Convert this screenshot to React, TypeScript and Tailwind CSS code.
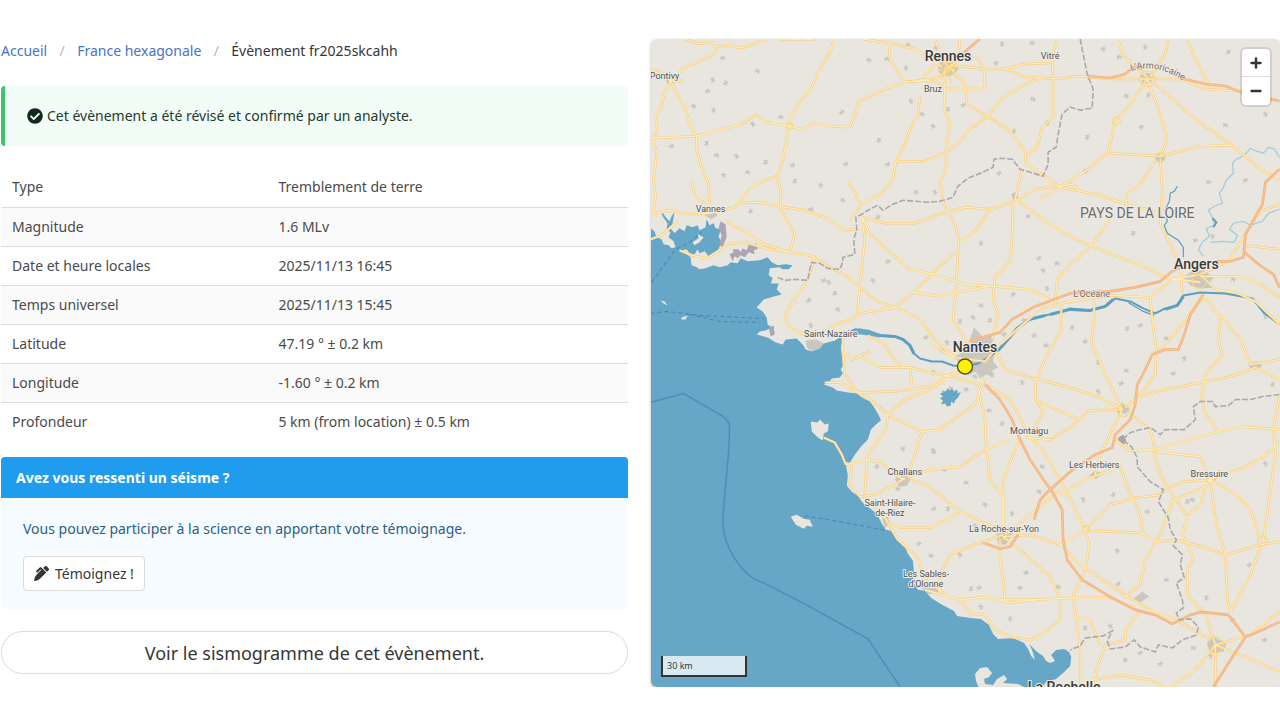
import { FaCheckCircle, FaPenAlt } from 'react-icons/fa'

const EVENT_ROWS = [
  { label: 'Type', value: 'Tremblement de terre' },
  { label: 'Magnitude', value: '1.6 MLv' },
  { label: 'Date et heure locales', value: '2025/11/13 16:45' },
  { label: 'Temps universel', value: '2025/11/13 15:45' },
  { label: 'Latitude', value: '47.19 ° ± 0.2 km' },
  { label: 'Longitude', value: '-1.60 ° ± 0.2 km' },
  { label: 'Profondeur', value: '5 km (from location) ± 0.5 km' },
]

const SEA =
  'M650,228 655,232 657,238 662,240 664,245 669,246 672,249 676,248 674,242 669,238 671,233 667,230 668,224 663,217 662,212 667,219 670,222 672,217 675,213 673,224 671,229 675,234 680,229 685,232 687,226 693,228 698,226 700,231 706,228 707,220 710,226 714,224 716,229 721,230 719,238 722,242 719,250 714,254 709,257 705,252 700,254 698,250 695,255 690,254 687,250 683,251 691,258 692,266 697,268 700,270 706,269 714,266 720,268 728,266 731,263 738,264 741,259 748,262 760,261 768,258 772,263 778,266 786,265 793,266 789,270 783,270 780,268 770,269 769,276 773,279 771,284 779,284 777,290 782,295 774,297 764,300 757,308 763,312 767,318 768,325 772,328 766,331 760,332 757,335 768,338 776,343 783,345 786,340 797,339 803,345 806,350 812,352 820,349 824,344 835,341 840,338 843,335 855,329 862,329 862,334 845,337 843,341 841,347 842,356 843,366 841,370 843,374 840,378 832,379 829,383 824,385 833,388 837,391 848,393 857,394 862,398 870,402 875,409 880,418 881,421 876,425 871,430 868,440 861,447 855,455 850,463 846,462 844,450 840,444 833,440 828,440 822,442 816,436 811,429 812,421 818,420 823,425 829,425 828,433 840,441 845,450 846,464 848,476 847,486 852,492 858,496 862,502 868,507 877,514 882,524 886,530 891,531 896,539 904,545 908,554 913,561 914,572 913,582 918,590 925,591 931,598 942,605 954,611 957,616 970,618 981,619 989,625 993,634 998,639 1013,638 1024,643 1028,649 1031,656 1035,660 1032,650 1029,644 1037,652 1043,656 1046,661 1050,663 1055,661 1051,655 1056,650 1064,649 1069,652 1071,657 1070,666 1064,672 1056,679 1046,682 1040,690 650,690 Z'

const LAND_ISLANDS = [
  'M811,422 818,423 820,420 825,425 829,424 828,432 824,434 823,441 818,438 812,432 Z',
  'M791,517 797,515 804,519 810,520 813,527 807,526 804,529 796,525 Z',
  'M661,301 665,302 668,306 664,304 Z',
  'M682,318 688,316 686,320 682,320 Z',
  'M693,243 699,239 698,235 704,238 700,243 695,246 Z',
  'M975,674 980,668 987,667 992,673 989,677 984,679 985,684 993,685 997,679 1004,675 1007,679 1003,683 1018,684 1030,690 980,690 976,681 Z',
]

const LOIRE =
  '843,333 860,331 868,332 880,336 895,337 903,340 910,346 914,354 920,359 932,362 942,362 953,366 965,367 978,364 990,357 998,351 1007,341 1017,329 1029,320 1045,316 1058,313 1070,309 1090,311 1105,307 1115,299 1130,302 1143,309 1155,314 1165,309 1177,306 1183,296 1200,293 1225,294 1252,299 1263,313 1279,325'

const ROADS = [
  '685,40 700,45 712,43 717,48 732,46 737,49 747,48 757,44 767,40',
  '717,48 714,55 700,62 688,67 676,77 671,82',
  '651,70 661,72 671,82 684,82',
  '671,82 665,94 661,110 656,118 658,130 653,141 657,152 656,165 654,180 656,198 654,214',
  '671,82 678,96 686,110 690,125 697,137',
  '651,139 675,138 697,137 722,130 740,126 756,116 770,124 789,127 802,130 815,124 830,127 850,128 856,113 860,100',
  '834,40 831,52 820,70 811,90 798,105 790,120 786,145 783,162 777,177 781,192 781,210 790,225 795,234 790,254',
  '780,41 790,40 802,41 816,40',
  '697,137 697,150 702,168 709,185 710,205',
  '692,183 695,195 702,203 710,204',
  '651,216 668,211 690,215 710,214 735,208 750,190 765,181 777,177',
  '738,204 760,203 785,208 805,211 825,218 845,231 858,230',
  '848,183 855,192 860,205',
  '651,240 662,236 678,222',
  '727,222 745,232 765,245 790,253 814,257',
  '680,251 692,256 707,259 718,252 728,245 745,243 770,250 790,253',
  '814,257 813,264 808,280 795,300 785,316 790,328 803,335 812,339',
  '814,257 830,268 845,275 860,288 880,303 897,309 920,320 935,340 955,358',
  '860,288 857,318 836,325 827,332',
  '843,338 843,350 845,375 858,393',
  '825,383 840,383 858,393 870,400 888,415',
  '843,352 852,360 870,352',
  '862,40 890,44 915,50 930,60 942,68',
  '889,44 890,60 900,76 905,83',
  '860,102 885,90 905,83 920,82 935,66',
  '905,83 925,81 945,86',
  '945,68 945,85 944,110 950,125 946,150 946,170 940,185 944,205 955,225 959,240 956,290 953,320 965,340 975,348',
  '920,98 918,115 910,130 905,145 896,162 893,180 880,195 862,205 850,222',
  '896,162 925,162 946,153 960,142 970,130 987,118 1003,98 1025,85 1045,77',
  '950,68 965,85 967,105 987,117 1010,132 1025,152 1026,165 1045,177 1060,188 1080,192',
  '1026,158 1037,148 1042,128 1053,118 1053,80 1052,60',
  '950,66 985,70 1005,70 1025,78 1060,80 1075,77 1110,80 1147,80 1180,80 1205,90 1240,92',
  '1005,70 1025,65 1050,64 1057,40',
  '945,90 985,90 984,70 978,60 955,56',
  '935,40 942,60 950,70',
  '960,40 958,60 940,78 920,82',
  '862,218 885,224 915,224 945,213 965,208 990,210 1015,202 1035,190 1072,185 1080,192 1100,196 1126,205 1155,212',
  '1022,170 1015,200 1050,225 1072,238 1090,246 1120,258 1150,270 1165,278 1200,283',
  '1013,202 1012,240 1010,262 995,278 993,300 998,315 992,340',
  '990,210 975,232 960,242',
  '862,218 870,235 887,250 910,270 935,275 965,285 995,287 1030,290 1050,300',
  '862,218 865,240 860,288',
  '956,252 935,272 913,293 895,308 860,314',
  '913,293 940,297 957,293 990,287',
  '1110,220 1090,248 1070,265 1057,280 1055,305',
  '1061,308 1061,330 1045,360 1036,380 1035,398 1043,412 1032,432',
  '860,357 880,368 910,368 935,374 955,378 980,385',
  '868,336 885,345 895,362 905,368',
  '910,368 912,385',
  '860,393 895,392 930,387 950,375 965,372',
  '888,415 905,400 930,390 945,380',
  '888,415 922,432 940,430 965,412 975,405 985,378',
  '888,415 886,430 875,445 867,457 865,495',
  '922,432 915,455 908,477',
  '978,388 985,420 986,445 990,480 1003,497 1003,530',
  '992,345 1005,370 1030,378 1070,388 1100,398 1122,410',
  '1035,400 1050,407 1080,420',
  '985,385 1010,400 1020,418 1028,435 1042,450 1060,480 1070,500 1085,530 1089,545 1085,570 1073,595 1076,620 1080,650 1080,687',
  '1025,438 1050,440 1070,428 1090,411 1122,410',
  '930,345 955,358 985,362 1000,345 1040,310 1065,303 1110,296 1150,298 1172,280 1200,275',
  '1118,40 1122,55 1133,66 1147,78',
  '1168,40 1165,55 1150,78',
  '1187,40 1195,60 1210,88',
  '1147,80 1130,105 1115,122 1108,153 1085,172 1040,200',
  '1108,154 1160,157 1200,147 1230,146',
  '1147,80 1160,115 1167,140 1160,158',
  '1155,85 1195,120 1230,145 1260,170 1279,182',
  '1160,160 1162,190 1160,225 1170,245 1180,265 1182,295',
  '1155,162 1140,185 1126,195 1126,205',
  '1279,205 1260,212 1243,238 1228,262 1200,275',
  '1243,246 1279,250',
  '1150,298 1152,320 1156,350 1155,375 1140,395 1125,408',
  '1200,277 1240,277 1260,285 1279,298',
  '1200,275 1215,290 1235,293 1255,302 1279,325',
  '1203,298 1178,330 1158,352',
  '1205,298 1220,318 1218,340 1222,355 1205,375 1201,395 1205,415 1218,432',
  '1220,315 1240,340 1250,365 1279,360',
  '1279,380 1255,368 1230,377 1201,383 1175,388 1155,392 1140,397',
  '1094,300 1094,320 1091,342 1105,375 1122,410',
  '1122,410 1112,430 1100,455 1095,475',
  '1130,415 1150,430 1155,450 1190,440 1218,432 1240,427 1279,430',
  '1279,395 1273,430 1275,455 1270,490 1263,540 1250,575 1230,612',
  '1115,440 1130,451 1153,450 1160,475 1172,495 1187,517 1182,535 1193,558 1187,570 1187,595 1205,615 1215,645',
  '1155,452 1200,457 1210,480',
  '1060,495 1085,480 1120,467 1128,490 1140,515 1143,535 1155,542',
  '1085,530 1110,505 1135,498 1160,495 1168,487',
  '1087,531 1140,533 1155,542 1175,540 1205,548 1225,555 1260,545 1279,542',
  '1155,542 1145,560 1140,585 1125,597',
  '1170,487 1185,482 1210,480 1235,495 1250,510 1260,540',
  '1170,502 1205,487 1210,480 1215,520 1225,555 1227,600 1230,612',
  '1210,480 1245,467 1262,458 1279,442',
  '1205,487 1200,505 1188,515',
  '1173,500 1160,535 1155,542',
  '1003,537 1030,535 1060,545 1085,530',
  '1063,548 1080,565 1125,595 1150,610 1180,622 1210,640',
  '1000,600 1030,600 1073,598 1110,598 1135,608',
  '1003,537 1020,550 1050,577 1060,600 1060,620 1045,632 1030,641',
  '1140,610 1125,630 1125,640 1105,645 1098,665 1092,687',
  '1076,617 1090,620 1100,645',
  '1092,680 1120,675 1150,680 1165,687',
  '1215,645 1250,635 1279,612',
  '1279,672 1245,657 1215,645 1195,670 1170,687',
  '1215,645 1215,687',
  '847,465 868,460 880,462 895,475 905,480',
  '852,466 850,485 860,497 875,495 895,485 905,478',
  '908,478 930,470 960,467 985,450 1010,440',
  '910,480 930,487 960,512 1000,530',
  '962,512 930,528 900,528 890,522',
  '1020,440 1013,455 1003,480 1003,530',
  '1003,535 975,545 950,555 940,575 940,592',
  '868,500 885,518 898,540 918,558 925,580 945,594',
  '925,590 960,600 985,597 1010,603 1035,600',
  '1000,540 1000,560 1003,580 1005,602',
  '960,600 970,613 985,615 995,630 1010,637 1030,640',
  '1005,535 1018,525 1034,512 1060,490',
  '824,438 835,443 842,455 846,465',
]

const MOTORWAYS = [
  '980,40 968,50 960,58',
  '1088,77 1110,79 1125,75 1135,67 1142,70',
  '1180,79 1205,85 1225,87 1245,95 1279,102',
  '1279,170 1265,183 1262,205 1245,235 1243,258 1230,262 1215,262',
  '1243,252 1258,265 1273,275 1279,288',
  '970,342 985,337 1000,333 1012,320 1035,307 1070,294 1110,292 1135,288 1160,282 1172,272 1190,262',
  '1203,295 1190,315 1184,335 1178,350 1165,350 1152,355 1145,370 1137,385 1135,405 1130,420 1115,435 1112,448 1095,455 1070,472 1050,490 1040,500 1034,520',
  '985,385 1000,400 1012,420 1020,440 1030,460 1042,478 1052,492 1062,510 1063,540 1067,560 1082,580 1110,597 1135,610 1155,615 1172,624 1190,615 1200,612 1228,615 1245,637 1232,657 1213,687',
  '1245,637 1262,630 1279,622',
  '983,543 1000,549 1010,547 1018,535',
]

const BORDERS = [
  '778,278 785,281 795,280 808,281 810,270 812,263 820,264 828,269 840,270 843,263 843,258 855,255 854,240 857,230 856,218 862,215 868,211 878,206 883,211 893,205 903,201 915,202 928,203 940,202 953,198 958,187 968,179 985,172 993,168 994,160 1002,159 1012,160 1020,170 1043,177 1048,165 1048,153 1056,148 1058,135 1062,115 1070,108 1080,111 1092,109 1093,90 1087,75 1084,60 1080,40',
  '1279,395 1262,397 1250,400 1235,400 1228,406 1215,407 1212,402 1200,402 1193,407 1195,420 1184,430 1165,430 1160,435 1150,428 1140,430 1130,433 1122,440 1131,447 1137,458 1137,467 1150,482 1163,490 1158,502 1168,518 1170,530 1176,540 1173,546 1182,555 1180,565 1184,578 1176,583 1182,600 1183,608 1176,613 1179,620 1190,619 1198,627 1196,635 1182,640 1172,648 1158,645 1155,652 1140,647 1134,640 1125,647 1110,649 1107,641 1112,631 1103,636 1085,638 1080,646 1070,650',
]

// Built-up areas: x, y of each village
const VILLAGES = [
  [723, 59], [758, 72], [713, 81], [726, 84], [708, 92], [694, 107], [714, 111], [842, 113], [781, 118], [753, 125], [707, 144], [672, 147],
  [717, 156], [737, 157], [766, 163], [793, 166], [748, 173], [724, 176], [795, 182], [846, 165], [843, 201], [821, 186], [751, 212], [811, 210],
  [869, 61], [906, 69], [908, 46], [887, 60], [936, 49], [1002, 45], [996, 64], [1032, 44], [911, 102], [948, 110], [963, 106], [922, 115],
  [933, 127], [879, 141], [888, 165], [1033, 100], [1047, 124], [1014, 132], [999, 174], [916, 193], [935, 193], [878, 218], [1028, 217],
  [1103, 50], [1145, 48], [1228, 53], [1119, 58], [1126, 97], [1148, 96], [1141, 128], [1225, 126], [1265, 115], [1087, 138], [1245, 181],
  [1208, 183], [1212, 237], [1133, 234], [1195, 241], [1085, 172], [829, 283], [835, 294], [824, 281], [838, 310], [811, 326], [809, 301],
  [888, 262], [873, 281], [981, 244], [1039, 259], [1057, 264], [1043, 271], [1047, 289], [1013, 295], [981, 306], [973, 318], [960, 322],
  [926, 338], [942, 351], [947, 343], [990, 321], [1004, 335], [975, 377], [992, 375], [933, 373], [966, 390], [951, 389], [1022, 383],
  [1002, 424], [989, 411], [903, 449], [933, 451], [1034, 336], [1046, 346], [1024, 321], [1072, 328], [1085, 342], [1126, 371], [1098, 392],
  [1098, 363], [1121, 384], [1166, 339], [1184, 359], [1127, 329], [1140, 326], [1233, 280], [1265, 317], [1272, 385], [1173, 374],
  [944, 470], [934, 452], [877, 467], [966, 483], [985, 505], [948, 509], [934, 509], [898, 489], [975, 526], [1012, 514], [919, 544],
  [931, 556], [960, 555], [971, 589], [979, 588], [1020, 588], [981, 607], [1010, 619], [1026, 573], [1042, 467], [1083, 500], [1113, 495],
  [1147, 512], [1192, 500], [1117, 551], [1118, 584], [1166, 580], [1140, 600], [1206, 598], [1249, 565], [1232, 620], [1110, 626], [1125, 660],
  [1160, 664], [1193, 648], [1265, 464], [1085, 628], [1140, 653], [1058, 587], [1210, 656], [1187, 502], [1264, 640], [1039, 492],
]

const TOWNS = [
  'M665,78 672,74 676,80 674,86 668,85 Z',
  'M705,216 708,211 714,210 718,216 712,220 Z',
  'M938,66 944,60 954,63 959,70 953,76 944,78 939,73 Z',
  'M1140,75 1149,74 1154,79 1150,84 1142,85 Z',
  'M1154,156 1160,154 1165,159 1162,163 1156,162 Z',
  'M1011,195 1017,192 1018,200 1014,203 Z',
  'M806,341 817,340 824,344 820,349 812,352 807,348 Z',
  'M955,357 964,352 970,340 974,328 979,333 983,338 990,334 994,340 988,348 994,355 993,362 998,368 992,371 994,378 986,375 980,379 976,372 968,376 963,371 Z',
  'M1183,278 1191,272 1203,271 1213,278 1208,285 1215,288 1199,289 1190,286 Z',
  'M1116,408 1122,403 1130,409 1126,414 1118,414 Z',
  'M895,479 902,474 911,479 907,486 899,487 Z',
  'M996,534 1004,529 1013,533 1006,545 998,544 Z',
  'M1089,476 1095,471 1103,474 1096,479 Z',
  'M1132,600 1142,592 1149,597 1140,602 Z',
  'M1206,643 1213,637 1226,643 1223,652 1210,653 Z',
  'M1248,364 1256,362 1262,366 1257,370 1250,370 Z',
  'M1205,476 1213,474 1216,480 1208,484 Z',
  'M882,519 888,517 890,524 885,528 Z',
  'M922,588 930,586 941,589 937,594 928,594 Z',
]

const MARSHES = [
  'M721,222 726,225 727,238 723,248 720,246 722,236 719,229 Z',
  'M730,255 734,253 733,250 739,250 741,253 743,249 747,251 750,243 753,246 757,244 758,250 754,251 755,255 749,253 745,258 741,256 738,259 735,257 733,262 Z',
  'M769,328 774,326 775,335 771,337 Z',
  'M1118,438 1123,435 1126,441 1123,446 1118,443 Z',
]

const CITIES = [
  { text: 'Rennes', x: 948, y: 62 },
  { text: 'Nantes', x: 975, y: 353 },
  { text: 'Angers', x: 1196, y: 270 },
  { text: 'La Rochelle', x: 1064, y: 692 },
]

const PLACES = [
  { text: 'Vitré', x: 1050, y: 60 },
  { text: 'Bruz', x: 933, y: 93 },
  { text: 'Pontivy', x: 665, y: 80 },
  { text: 'Vannes', x: 711, y: 213 },
  { text: 'Saint-Nazaire', x: 831, y: 338 },
  { text: 'Montaigu', x: 1029, y: 434 },
  { text: 'Les Herbiers', x: 1094, y: 468 },
  { text: 'Bressuire', x: 1209, y: 477 },
  { text: 'Challans', x: 905, y: 475 },
  { text: 'Saint-Hilaire-', x: 890, y: 506 },
  { text: 'de-Riez', x: 890, y: 516 },
  { text: 'La Roche-sur-Yon', x: 1004, y: 532 },
  { text: 'Les Sables-', x: 926, y: 577 },
  { text: "d'Olonne", x: 926, y: 587 },
]

function RegionMap() {
  return (
    <svg
      viewBox="651 40 629 647"
      preserveAspectRatio="xMidYMid slice"
      className="block h-full w-full"
      role="img"
      aria-label="Carte des Pays de la Loire"
      fontFamily="Roboto, sans-serif"
    >
      <rect x="600" y="0" width="740" height="740" fill="#e8e6df" />
      <g fill="#c9c7c0">
        {VILLAGES.map(([x, y], i) => (
          <path
            key={i}
            d="M-3,-1 -1,-1 0,-3 1,-1 3,-2 2,0 3,2 0,1 -1,3 -2,1 Z"
            transform={`translate(${x} ${y}) rotate(${(i * 47) % 180})`}
          />
        ))}
        {TOWNS.map((d) => (
          <path key={d} d={d} />
        ))}
      </g>
      <path d={SEA} fill="#66a6c6" />
      <g fill="#e8e6df">
        {LAND_ISLANDS.map((d) => (
          <path key={d} d={d} />
        ))}
      </g>
      <g fill="#aba5b4">
        {MARSHES.map((d) => (
          <path key={d} d={d} />
        ))}
      </g>
      <path
        d="M940,394 943,393 942,391 946,392 947,389 950,391 952,389 954,392 957,390 958,394 961,392 958,398 955,401 954,404 951,402 951,406 947,407 945,404 941,405 943,401 940,399 943,397 Z"
        fill="#66a6c6"
      />

      <g fill="none" stroke="#9ccbdc" strokeWidth="1.2">
        <path d="M1279,158 1274,150 1268,148 1263,154 1256,152 1250,149 1244,156 1236,160 1232,164 1233,174 1226,181 1222,190 1219,194 1222,204 1214,207 1208,211 1212,218 1214,226 1206,229 1209,237 1202,243 1198,250 1203,257" />
        <path d="M1279,210 1268,214 1262,222 1250,226 1243,222 1233,224 1229,230 1237,236 1234,243 1222,242 1210,243" />
      </g>
      <path
        d="M1177,187 1174,192 1170,194 1169,202 1165,210 1167,222 1164,226 1167,234 1178,241 1183,248 1183,258"
        fill="none"
        stroke="#5f9fc0"
        strokeWidth="1.2"
      />
      <path d="M1212,219 1216,223 1213,228" fill="none" stroke="#5f9fc0" strokeWidth="2" />

      <polyline points={LOIRE} fill="none" stroke="#5b9fc1" strokeWidth="2" strokeLinejoin="round" />
      <g fill="none" stroke="#5b9fc1" strokeWidth="3" strokeLinejoin="round">
        <path d="M862,332 880,336 895,337 903,340 910,346 914,354" />
        <path d="M998,351 1007,341 1017,329 1029,320 1045,316" />
        <path d="M1050,315 1070,310 1090,311 1105,307 1113,300" />
        <path d="M1165,310 1177,306 1183,297" />
      </g>
      <path d="M843,335 855,329 868,330 882,335 880,338 862,335 Z" fill="#66a6c6" />
      <path d="M1128,303 1143,312 1154,316" fill="none" stroke="#5b9fc1" strokeWidth="1.2" />

      {/* Roads: coloured casing, then the lighter centre line */}
      <g fill="none" strokeLinejoin="round">
        <g stroke="#f9cd85" strokeWidth="2.5">
          {ROADS.map((points) => (
            <polyline key={points} points={points} />
          ))}
        </g>
        <g stroke="#fdf1bb" strokeWidth="1.1">
          {ROADS.map((points) => (
            <polyline key={points} points={points} />
          ))}
        </g>
        <g stroke="#fad675" strokeWidth="1">
          <circle cx="948" cy="70" r="7" />
          <circle cx="948" cy="70" r="3" />
          <path d="M940,80 948,70 957,79M948,70 951,84M937,72 959,68" />
          <circle cx="1147" cy="80" r="8" />
          <circle cx="1160" cy="158" r="5" />
          <circle cx="790" cy="127" r="3" />
          <circle cx="1116" cy="122" r="4" />
          <circle cx="1123" cy="411" r="6" />
          <circle cx="1215" cy="645" r="8" />
          <circle cx="1262" cy="541" r="5" />
          <circle cx="1003" cy="535" r="5" />
          <circle cx="1086" cy="529" r="3" />
          <circle cx="1199" cy="282" r="7" />
        </g>
        <g stroke="#f3b07b" strokeWidth="2.6">
          {MOTORWAYS.map((points) => (
            <polyline key={points} points={points} />
          ))}
        </g>
        <g stroke="#f9c795" strokeWidth="1">
          {MOTORWAYS.map((points) => (
            <polyline key={points} points={points} />
          ))}
        </g>
      </g>

      <g fill="none" stroke="#aba7af" strokeWidth="1.6" strokeDasharray="6 2">
        {BORDERS.map((points) => (
          <polyline key={points} points={points} />
        ))}
      </g>

      <path
        d="M650,403 L684,394 L722,416 Q730,421 730,428 L729,452 L723,520 C723,548 744,578 764,583 L805,604 L868,639 L901,688"
        fill="none"
        stroke="#4c8fb2"
        strokeWidth="1.5"
      />
      <g fill="none" stroke="#4088b2" strokeWidth="1" strokeDasharray="4 3">
        <path d="M651,314 667,312 700,316 764,319" />
        <path d="M690,315 720,322 760,323" />
        <path d="M652,283 676,250 690,243 702,233" />
        <path d="M805,516 840,522 888,531" />
      </g>

      <g textAnchor="middle" stroke="#efede8" strokeWidth="2" strokeLinejoin="round" paintOrder="stroke">
        <g fontSize="14" fontWeight="500" fill="#3a3a3a">
          {CITIES.map((city) => (
            <text key={city.text} x={city.x} y={city.y}>{city.text}</text>
          ))}
        </g>
        <g fontSize="9" fill="#505050">
          {PLACES.map((place) => (
            <text key={place.text} x={place.x} y={place.y}>{place.text}</text>
          ))}
        </g>
        <text x="1137" y="219" fontSize="14" fill="#6b6b6b">PAYS DE LA LOIRE</text>
      </g>
      <g fontSize="9" fill="#7a6a62" stroke="#efede8" strokeWidth="1" paintOrder="stroke">
        <path id="armoricaine" d="M1131,72 Q1158,63 1186,84" fill="none" stroke="none" />
        <text>
          <textPath href="#armoricaine">L&apos;Armoricaine</textPath>
        </text>
        <text x="1073" y="298">L&apos;Océane</text>
      </g>

      <circle cx="965" cy="367" r="7.5" fill="#fff200" stroke="#4d4a1c" strokeWidth="1.3" />
    </svg>
  )
}

function ZoomControls() {
  return (
    <div className="absolute top-[10px] right-[10px] flex flex-col divide-y divide-[#dddddd] overflow-hidden rounded bg-white shadow-[0_0_0_2px_rgba(0,0,0,0.1)]">
      <button type="button" aria-label="Zoomer" className="flex h-7 w-7 items-center justify-center">
        <svg viewBox="0 0 12 12" className="h-3 w-3" stroke="#333333" strokeWidth="2.4" strokeLinecap="round">
          <path d="M6 1.5v9M1.5 6h9" />
        </svg>
      </button>
      <button type="button" aria-label="Dézoomer" className="flex h-7 w-7 items-center justify-center">
        <svg viewBox="0 0 12 12" className="h-3 w-3" stroke="#333333" strokeWidth="2.4" strokeLinecap="round">
          <path d="M1.5 6h9" />
        </svg>
      </button>
    </div>
  )
}

function Breadcrumb() {
  return (
    <nav aria-label="Fil d'Ariane">
      <ol className="flex h-6 items-center">
        <li><a href="#accueil" className="text-[#4673cc]">Accueil</a></li>
        <li className="flex">
          <span className="w-[30px] text-center text-[#b5b5b5]">/</span>
          <a href="#france" className="text-[#4673cc]">France hexagonale</a>
        </li>
        <li className="flex">
          <span className="w-[30px] text-center text-[#b5b5b5]">/</span>
          <span className="text-[#363636]">Évènement fr2025skcahh</span>
        </li>
      </ol>
    </nav>
  )
}

export default function App() {
  return (
    <main className="grid grid-cols-[627fr_629fr] gap-x-[23px] bg-white pt-[39px] pl-px font-['Noto_Sans',sans-serif] text-sm leading-6 text-[#4a4a4a]">
      <section>
        <Breadcrumb />

        <div className="mt-[23px] flex h-[60px] items-center gap-1 rounded-sm border-l-4 border-[#3ec46d] bg-[#f3fdf7] pl-[22px] text-[#1f3a2a]">
          <FaCheckCircle className="h-4 w-4 text-[#0f2a1b]" />
          <p>Cet évènement a été révisé et confirmé par un analyste.</p>
        </div>

        <table className="mt-[22px] w-full table-fixed">
          <tbody>
            {EVENT_ROWS.map((row) => (
              <tr key={row.label} className="h-[39px] border-b border-[#dbdbdb] last:border-b-0 even:bg-[#fafafa]">
                <th scope="row" className="w-[42.5%] px-[11px] text-left font-normal">{row.label}</th>
                <td className="px-[11px]">{row.value}</td>
              </tr>
            ))}
          </tbody>
        </table>

        <article className="mt-4 overflow-hidden rounded bg-[#f5fbfe]">
          <h2 className="flex h-[41px] items-center bg-[#209cee] px-[15px] text-sm font-bold text-white">
            Avez vous ressenti un séisme ?
          </h2>
          <div className="px-[22px] pt-[19px] pb-[18px] text-[#2b5f86]">
            <p>Vous pouvez participer à la science en apportant votre témoignage.</p>
            <button type="button" className="mt-[15px] flex h-[35px] items-center gap-1.5 rounded border border-[#dbdbdb] bg-white px-2.5 text-[#363636]">
              <FaPenAlt className="h-[15px] w-[15px]" />
              Témoignez !
            </button>
          </div>
        </article>

        <button type="button" className="mt-[22px] h-[43px] w-full rounded-full border border-[#dbdbdb] bg-white text-lg text-[#363636]">
          Voir le sismogramme de cet évènement.
        </button>
      </section>

      <section className="relative h-[90vh] overflow-hidden rounded-md shadow-[0_1px_3px_rgba(0,0,0,0.3)]">
        <RegionMap />
        <ZoomControls />
        <div className="absolute bottom-[10px] left-[10px] w-[86px] border-2 border-t-0 border-[#333333] bg-white/75 px-1 font-['Open_Sans',sans-serif] text-[9px] leading-[19px] text-[#333333]">
          30 km
        </div>
      </section>
    </main>
  )
}
